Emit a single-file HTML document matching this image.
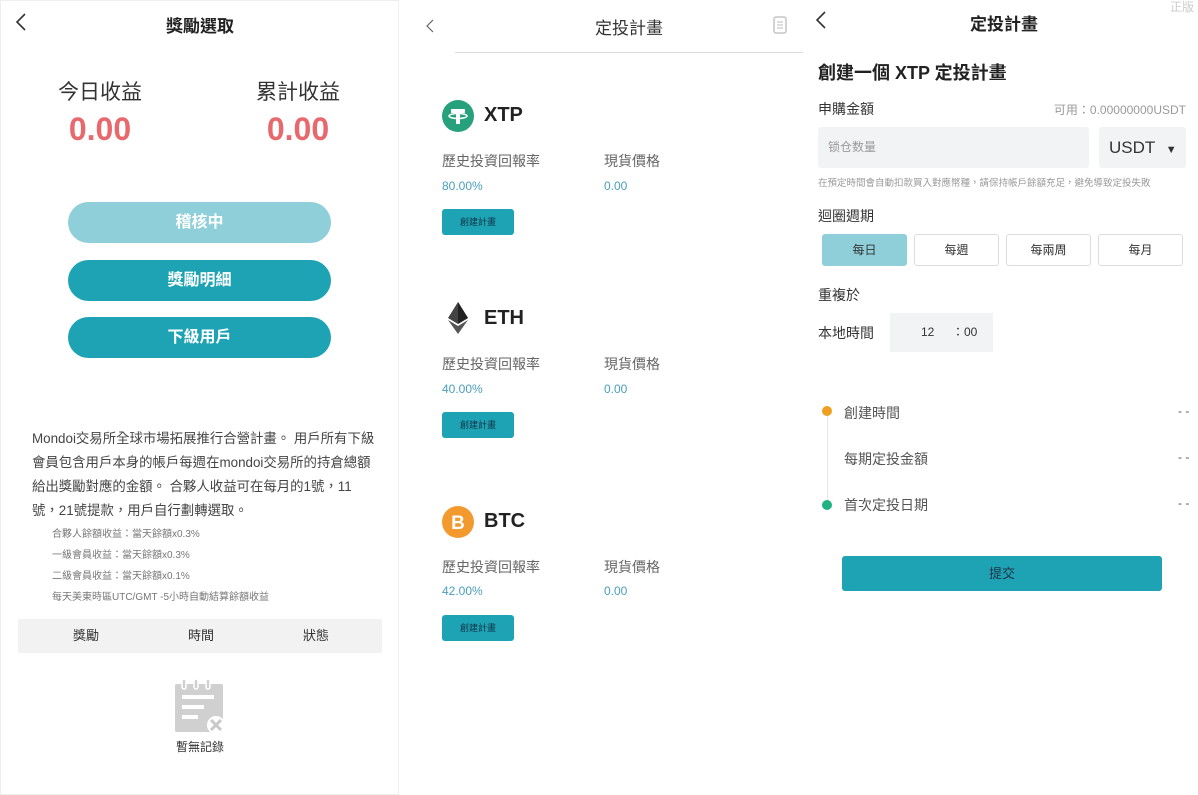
<!DOCTYPE html>
<html><head><meta charset="utf-8"><style>
*{margin:0;padding:0;box-sizing:border-box}
body{width:1198px;height:795px;background:#fff;position:relative;overflow:hidden;font-family:"Liberation Sans","Noto Sans CJK TC",sans-serif;color:#333}
.a{position:absolute;white-space:nowrap}
.btn{position:absolute;border-radius:21px;color:#fff;font-weight:bold;font-size:16px;text-align:center;line-height:41px;height:41px;left:68px;width:263px}
.cb{position:absolute;left:442px;width:72px;height:26px;background:#1ea3b5;border-radius:3px;color:#134;font-size:9px;text-align:center;line-height:26px}
.lbl{font-size:14px;color:#666}
.val{font-size:12px;color:#4a9ebd}
.nm{font-size:20px;font-weight:bold;color:#222}
.pb{position:absolute;top:234px;height:32px;width:85px;border:1px solid #ddd;border-radius:3px;font-size:12px;text-align:center;line-height:30px;color:#333}
</style></head><body>
<div class="a" style="left:0;top:0;width:399px;height:795px;border:1px solid #eee"></div>
<svg class="a" style="left:14px;top:12px" width="14" height="20"><path d="M11 2 L3 10 L11 18" stroke="#333" stroke-width="1.6" fill="none"/></svg>
<div class="a" style="left:0;width:400px;text-align:center;top:12px;font-size:17px;font-weight:bold;color:#222">獎勵選取</div>
<div class="a" style="left:40px;width:120px;text-align:center;top:76px;font-size:21px;color:#333">今日收益</div>
<div class="a" style="left:238px;width:120px;text-align:center;top:76px;font-size:21px;color:#333">累計收益</div>
<div class="a" style="left:40px;width:120px;text-align:center;top:111px;font-size:32px;font-weight:bold;color:#e8696d">0.00</div>
<div class="a" style="left:238px;width:120px;text-align:center;top:111px;font-size:32px;font-weight:bold;color:#e8696d">0.00</div>
<div class="btn" style="top:202px;background:#8ecfda">稽核中</div>
<div class="btn" style="top:260px;background:#1ea3b5">獎勵明細</div>
<div class="btn" style="top:317px;background:#1ea3b5">下級用戶</div>
<div class="a" style="left:32px;top:427px;width:345px;white-space:normal;font-size:13.4px;line-height:24px;color:#444">Mondoi交易所全球市場拓展推行合營計畫。 用戶所有下級會員包含用戶本身的帳戶每週在mondoi交易所的持倉總額給出獎勵對應的金額。 合夥人收益可在每月的1號，11號，21號提款，用戶自行劃轉選取。</div>
<div class="a" style="left:52px;top:524px;font-size:10px;color:#777;line-height:21px">合夥人餘額收益：當天餘額x0.3%<br>一級會員收益：當天餘額x0.3%<br>二級會員收益：當天餘額x0.1%<br>每天美東時區UTC/GMT -5小時自動結算餘額收益</div>
<div class="a" style="left:18px;top:619px;width:364px;height:34px;background:#f2f2f2;font-size:13px;color:#333;line-height:34px">
<span class="a" style="left:55px">獎勵</span><span class="a" style="left:170px">時間</span><span class="a" style="left:285px">狀態</span></div>
<svg class="a" style="left:174px;top:679px" width="54" height="56"><rect x="1" y="5" width="48" height="48" rx="2" fill="#d0d0d0"/><rect x="8" y="0" width="4" height="10" rx="2" fill="#d0d0d0" stroke="#fff" stroke-width="1.5"/><rect x="20" y="0" width="4" height="10" rx="2" fill="#d0d0d0" stroke="#fff" stroke-width="1.5"/><rect x="32" y="0" width="4" height="10" rx="2" fill="#d0d0d0" stroke="#fff" stroke-width="1.5"/><rect x="8" y="16" width="32" height="4" fill="#fff"/><rect x="8" y="26" width="22" height="4" fill="#fff"/><rect x="8" y="36" width="16" height="4" fill="#fff"/><circle cx="42" cy="46" r="9" fill="#fff"/><path d="M37 41 L47 51 M47 41 L37 51" stroke="#c8c8c8" stroke-width="3"/></svg>
<div class="a" style="left:0;width:400px;text-align:center;top:738px;font-size:12px;color:#333">暫無記錄</div>

<svg class="a" style="left:425px;top:18px" width="10" height="16"><path d="M8 2 L2 8 L8 14" stroke="#666" stroke-width="1.2" fill="none"/></svg>
<div class="a" style="left:595px;top:14px;font-size:17px;color:#333">定投計畫</div>
<svg class="a" style="left:772px;top:16px" width="16" height="18"><rect x="2" y="1" width="12" height="16" rx="2" stroke="#bbb" fill="none" stroke-width="1.3"/><path d="M5 6h6M5 9h6M5 12h6" stroke="#bbb"/></svg>
<div class="a" style="left:455px;top:52px;width:348px;height:1px;background:#ddd"></div>

<svg class="a" style="left:442px;top:100px" width="32" height="32"><circle cx="16" cy="16" r="16" fill="#26a17b"/><path d="M9 9h14v4h-5v11h-4v-11h-5z" fill="#fff"/><ellipse cx="16" cy="16" rx="9" ry="2.5" stroke="#fff" stroke-width="1.5" fill="none"/></svg>
<div class="a nm" style="left:484px;top:104px">XTP</div>
<div class="a lbl" style="left:442px;top:151px">歷史投資回報率</div><div class="a lbl" style="left:604px;top:151px">現貨價格</div>
<div class="a val" style="left:442px;top:179px">80.00%</div><div class="a val" style="left:604px;top:179px">0.00</div>
<div class="cb" style="top:209px">創建計畫</div>

<svg class="a" style="left:447px;top:302px" width="22" height="32"><path d="M11 0 L21 16 L11 22 L1 16Z" fill="#444"/><path d="M11 0 L11 22 L21 16Z" fill="#222"/><path d="M11 24 L21 18 L11 32 L1 18Z" fill="#555"/></svg>
<div class="a nm" style="left:484px;top:307px">ETH</div>
<div class="a lbl" style="left:442px;top:354px">歷史投資回報率</div><div class="a lbl" style="left:604px;top:354px">現貨價格</div>
<div class="a val" style="left:442px;top:382px">40.00%</div><div class="a val" style="left:604px;top:382px">0.00</div>
<div class="cb" style="top:412px">創建計畫</div>

<svg class="a" style="left:442px;top:506px" width="32" height="32"><circle cx="16" cy="16" r="16" fill="#f29a2e"/><text x="16" y="23" font-size="19" font-weight="bold" fill="#fff" text-anchor="middle" font-family="Liberation Sans">B</text></svg>
<div class="a nm" style="left:484px;top:510px">BTC</div>
<div class="a lbl" style="left:442px;top:557px">歷史投資回報率</div><div class="a lbl" style="left:604px;top:557px">現貨價格</div>
<div class="a val" style="left:442px;top:584px">42.00%</div><div class="a val" style="left:604px;top:584px">0.00</div>
<div class="cb" style="top:615px">創建計畫</div>

<svg class="a" style="left:814px;top:10px" width="14" height="20"><path d="M11 2 L3 10 L11 18" stroke="#333" stroke-width="1.6" fill="none"/></svg>
<div class="a" style="left:970px;top:10px;font-size:17px;font-weight:bold;color:#222">定投計畫</div>
<div class="a" style="left:1170px;top:-2px;font-size:12px;color:#ccc">正版</div>
<div class="a" style="left:818px;top:59px;font-size:18px;font-weight:bold;color:#222">創建一個 XTP 定投計畫</div>
<div class="a" style="left:818px;top:99px;font-size:14px;color:#333">申購金額</div>
<div class="a" style="right:12px;top:101px;font-size:12px;color:#999">可用：0.00000000USDT</div>
<div class="a" style="left:818px;top:127px;width:271px;height:41px;background:#f2f3f5;border-radius:3px;font-size:12px;color:#999;line-height:41px;padding-left:10px">锁仓数量</div>
<div class="a" style="left:1099px;top:127px;width:87px;height:41px;background:#f2f3f5;border-radius:3px;font-size:17px;color:#333;line-height:41px;padding-left:10px">USDT <span style="font-size:11px;margin-left:6px">▼</span></div>
<div class="a" style="left:818px;top:175px;font-size:9.5px;color:#999">在預定時間會自動扣款買入對應幣種，請保持帳戶餘額充足，避免導致定投失敗</div>
<div class="a" style="left:818px;top:206px;font-size:14px;color:#333">迴圈週期</div>
<div class="pb" style="left:822px;background:#8ecfda;border-color:#8ecfda">每日</div>
<div class="pb" style="left:914px">每週</div>
<div class="pb" style="left:1006px">每兩周</div>
<div class="pb" style="left:1098px">每月</div>
<div class="a" style="left:818px;top:285px;font-size:14px;color:#333">重複於</div>
<div class="a" style="left:818px;top:323px;font-size:14px;color:#333">本地時間</div>
<div class="a" style="left:890px;top:313px;width:103px;height:39px;background:#f2f3f5;font-size:12px;color:#333;line-height:39px"><span class="a" style="left:31px">12</span><span class="a" style="left:62px">：00</span></div>
<div class="a" style="left:827px;top:414px;width:1px;height:90px;background:#e6e6e6"></div>
<div class="a" style="left:822px;top:406px;width:10px;height:10px;border-radius:5px;background:#f0a020"></div>
<div class="a" style="left:822px;top:500px;width:10px;height:10px;border-radius:5px;background:#1eb37e"></div>
<div class="a" style="left:844px;top:403px;font-size:14px;color:#555">創建時間</div>
<div class="a" style="left:844px;top:449px;font-size:14px;color:#555">每期定投金額</div>
<div class="a" style="left:844px;top:495px;font-size:14px;color:#555">首次定投日期</div>
<div class="a" style="left:1178px;top:404px;font-size:12px;color:#555">- -</div>
<div class="a" style="left:1178px;top:450px;font-size:12px;color:#555">- -</div>
<div class="a" style="left:1178px;top:496px;font-size:12px;color:#555">- -</div>
<div class="a" style="left:842px;top:556px;width:320px;height:35px;background:#1ea3b5;border-radius:3px;text-align:center;line-height:35px;font-size:13px;color:#234">提交</div>
</body></html>
